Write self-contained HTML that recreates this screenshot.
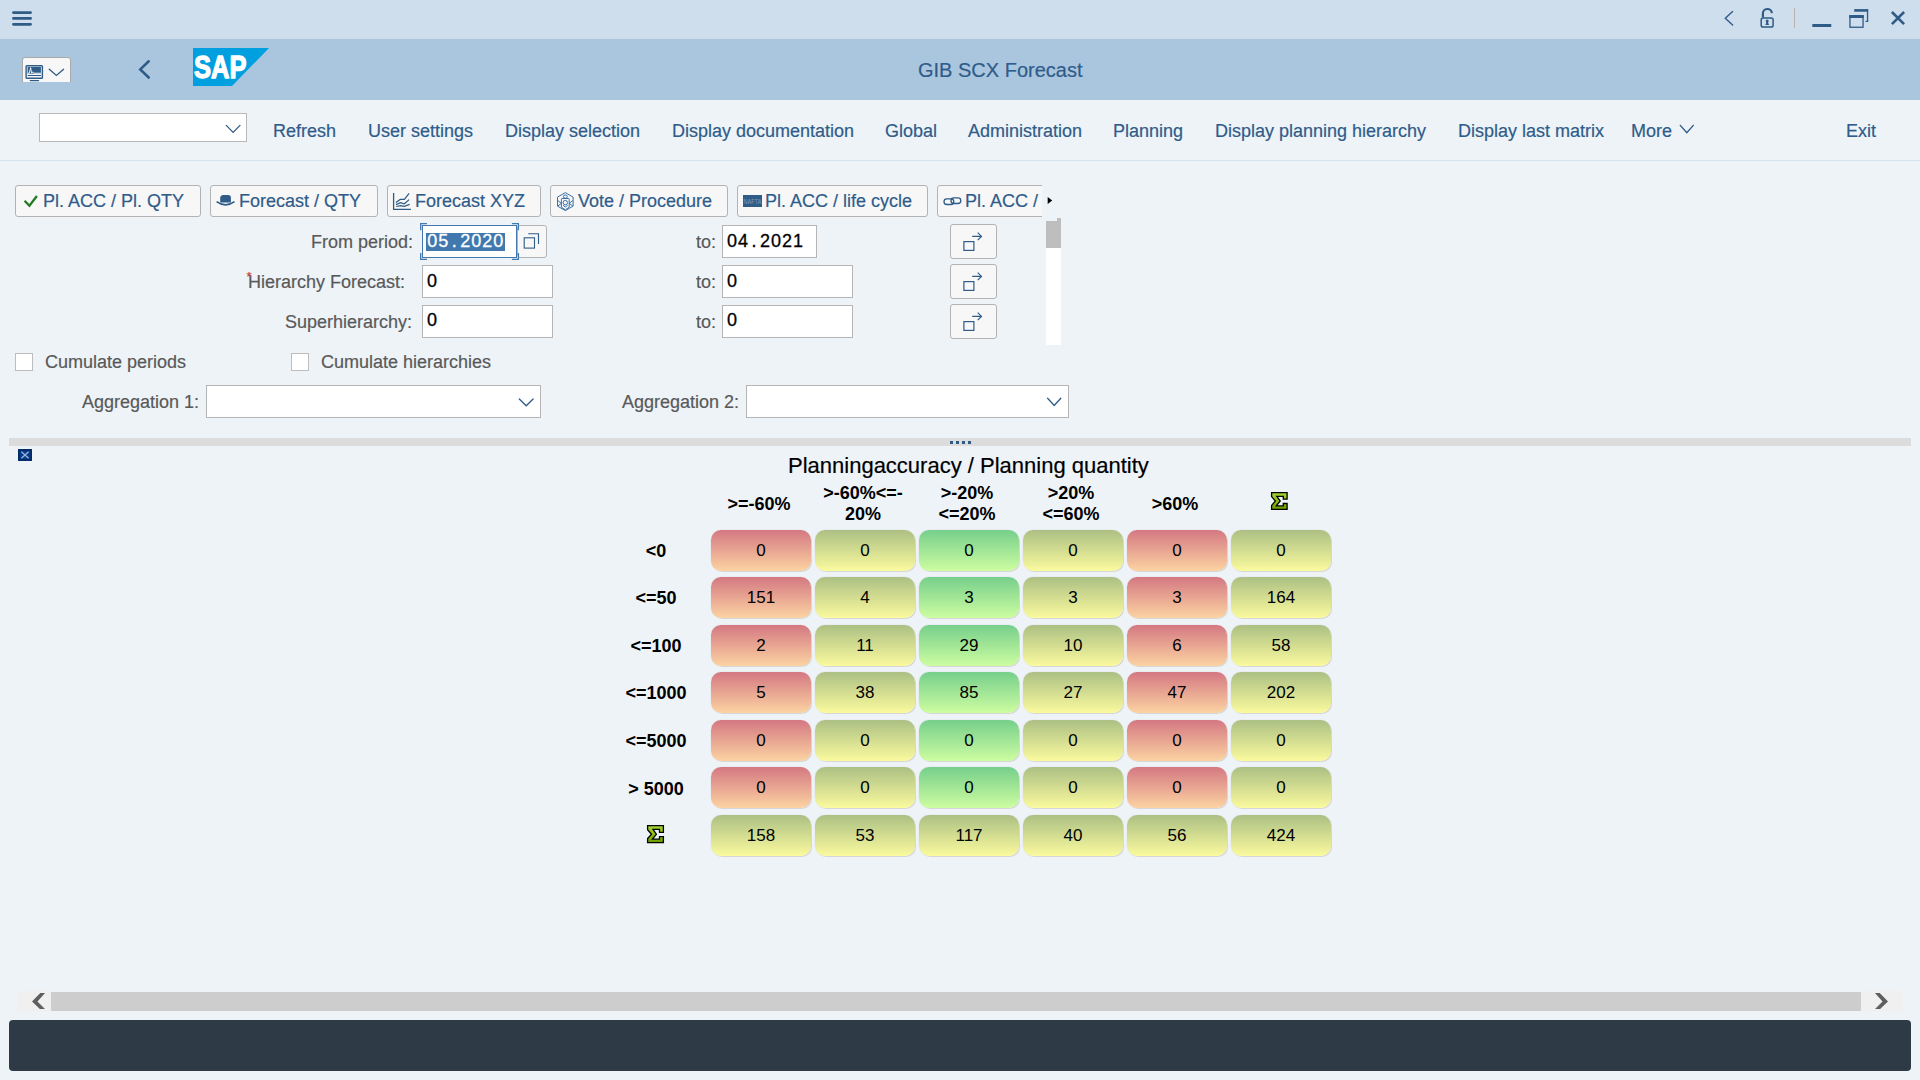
<!DOCTYPE html>
<html><head><meta charset="utf-8">
<style>
*{margin:0;padding:0;box-sizing:border-box}
html,body{width:1920px;height:1080px;overflow:hidden}
body{position:relative;background:#eef3f8;font-family:"Liberation Sans",sans-serif;color:#000}
.a{position:absolute}
.t{position:absolute;white-space:nowrap;line-height:1;-webkit-text-stroke:0.2px currentColor}
#top{left:0;top:0;width:1920px;height:39px;background:#cfdeed}
#hdr{left:0;top:39px;width:1920px;height:61px;background:#aac6df}
.tb{color:#2f5c8a;font-size:18px}
.btn{position:absolute;top:185px;height:32px;background:#f7f7f7;border:1px solid #b3b3b3;border-radius:3px}
.bt{color:#2f5c8a;font-size:18px}
.lbl{color:#595959;font-size:18px}
.inp{position:absolute;background:#fff;border:1px solid #b5b5b5}
.mn{font-size:18px;-webkit-text-stroke:0.3px currentColor}.mn i{font-style:normal;display:inline-block;width:11px;text-align:center}
.rb{position:absolute;left:950px;width:47px;height:35px;background:#f7f7f7;border:1px solid #b3b3b3;border-radius:3px}
.cb{position:absolute;top:353px;width:18px;height:18px;background:#fff;border:1px solid #bdbdbd}
.c{position:absolute;width:100px;height:41px;border-radius:10px;box-shadow:1px 1px 0 #d6d6d6,-0.5px -0.5px 0 #e4e6e8;font-size:17px;text-align:center;line-height:41px;color:#000}
.r{background:linear-gradient(#d47882,#fcd3a2)}
.y{background:linear-gradient(#abc084,#fbfa9e)}
.g{background:linear-gradient(#76cf8b,#cdfda1)}
.hd{position:absolute;font-weight:bold;font-size:18px;text-align:center;line-height:21px;width:104px}
.rl{position:absolute;font-weight:bold;font-size:18px;text-align:center;width:90px;left:611px;line-height:1}
</style></head><body>
<div id="top" class="a"></div>
<div id="hdr" class="a"></div>

<!-- toolbar -->
<div class="inp" style="left:39px;top:113px;width:208px;height:29px;border-color:#b9b9b9"></div>
<div class="t tb" style="left:273px;top:122px">Refresh</div>
<div class="t tb" style="left:368px;top:122px">User settings</div>
<div class="t tb" style="left:505px;top:122px">Display selection</div>
<div class="t tb" style="left:672px;top:122px">Display documentation</div>
<div class="t tb" style="left:885px;top:122px">Global</div>
<div class="t tb" style="left:968px;top:122px">Administration</div>
<div class="t tb" style="left:1113px;top:122px">Planning</div>
<div class="t tb" style="left:1215px;top:122px">Display planning hierarchy</div>
<div class="t tb" style="left:1458px;top:122px">Display last matrix</div>
<div class="t tb" style="left:1631px;top:122px">More</div>
<div class="t tb" style="left:1846px;top:122px">Exit</div>

<!-- title -->
<div class="t" style="left:918px;top:60px;font-size:20px;color:#2f5c8a">GIB SCX Forecast</div>

<!-- tab buttons -->
<div class="btn" style="left:15px;width:186px"></div>
<div class="t bt" style="left:43px;top:192px">Pl. ACC / Pl. QTY</div>
<div class="btn" style="left:210px;width:168px"></div>
<div class="t bt" style="left:239px;top:192px">Forecast / QTY</div>
<div class="btn" style="left:387px;width:154px"></div>
<div class="t bt" style="left:415px;top:192px">Forecast XYZ</div>
<div class="btn" style="left:550px;width:178px"></div>
<div class="t bt" style="left:578px;top:192px">Vote / Procedure</div>
<div class="btn" style="left:737px;width:191px"></div>
<div class="t bt" style="left:765px;top:192px">Pl. ACC / life cycle</div>

<!-- form -->
<div class="t lbl" style="left:311px;top:233px">From period:</div>
<div class="t lbl" style="left:248px;top:273px">Hierarchy Forecast:</div>
<div class="t lbl" style="left:285px;top:313px">Superhierarchy:</div>
<div class="inp" style="left:422px;top:265px;width:131px;height:33px"></div>
<div class="inp" style="left:422px;top:305px;width:131px;height:33px"></div>
<div class="t lbl" style="left:696px;top:233px">to:</div>
<div class="t lbl" style="left:696px;top:273px">to:</div>
<div class="t lbl" style="left:696px;top:313px">to:</div>
<div class="inp" style="left:722px;top:225px;width:95px;height:33px"></div>
<div class="inp" style="left:722px;top:265px;width:131px;height:33px"></div>
<div class="inp" style="left:722px;top:305px;width:131px;height:33px"></div>
<div class="rb" style="top:224px"></div>
<div class="rb" style="top:264px"></div>
<div class="rb" style="top:304px"></div>

<div class="cb" style="left:15px"></div>
<div class="t lbl" style="left:45px;top:353px">Cumulate periods</div>
<div class="cb" style="left:291px"></div>
<div class="t lbl" style="left:321px;top:353px">Cumulate hierarchies</div>
<div class="t lbl" style="left:82px;top:393px">Aggregation 1:</div>
<div class="inp" style="left:206px;top:385px;width:335px;height:33px"></div>
<div class="t lbl" style="left:622px;top:393px">Aggregation 2:</div>
<div class="inp" style="left:746px;top:385px;width:323px;height:33px"></div>

<!-- splitter -->
<div class="a" style="left:9px;top:438px;width:1902px;height:8px;background:#dcdcdc"></div>

<!-- matrix -->
<div class="t" style="left:788px;top:455px;font-size:22px">Planningaccuracy / Planning quantity</div>


<div class="hd" style="left:707px;top:494px">&gt;=-60%</div>
<div class="hd" style="left:811px;top:483px">&gt;-60%&lt;=-<br>20%</div>
<div class="hd" style="left:915px;top:483px">&gt;-20%<br>&lt;=20%</div>
<div class="hd" style="left:1019px;top:483px">&gt;20%<br>&lt;=60%</div>
<div class="hd" style="left:1123px;top:494px">&gt;60%</div>
<div class="rl" style="top:542px">&lt;0</div>
<div class="c r" style="left:711px;top:530px">0</div>
<div class="c y" style="left:815px;top:530px">0</div>
<div class="c g" style="left:919px;top:530px">0</div>
<div class="c y" style="left:1023px;top:530px">0</div>
<div class="c r" style="left:1127px;top:530px">0</div>
<div class="c y" style="left:1231px;top:530px">0</div>
<div class="rl" style="top:589px">&lt;=50</div>
<div class="c r" style="left:711px;top:577px">151</div>
<div class="c y" style="left:815px;top:577px">4</div>
<div class="c g" style="left:919px;top:577px">3</div>
<div class="c y" style="left:1023px;top:577px">3</div>
<div class="c r" style="left:1127px;top:577px">3</div>
<div class="c y" style="left:1231px;top:577px">164</div>
<div class="rl" style="top:637px">&lt;=100</div>
<div class="c r" style="left:711px;top:625px">2</div>
<div class="c y" style="left:815px;top:625px">11</div>
<div class="c g" style="left:919px;top:625px">29</div>
<div class="c y" style="left:1023px;top:625px">10</div>
<div class="c r" style="left:1127px;top:625px">6</div>
<div class="c y" style="left:1231px;top:625px">58</div>
<div class="rl" style="top:684px">&lt;=1000</div>
<div class="c r" style="left:711px;top:672px">5</div>
<div class="c y" style="left:815px;top:672px">38</div>
<div class="c g" style="left:919px;top:672px">85</div>
<div class="c y" style="left:1023px;top:672px">27</div>
<div class="c r" style="left:1127px;top:672px">47</div>
<div class="c y" style="left:1231px;top:672px">202</div>
<div class="rl" style="top:732px">&lt;=5000</div>
<div class="c r" style="left:711px;top:720px">0</div>
<div class="c y" style="left:815px;top:720px">0</div>
<div class="c g" style="left:919px;top:720px">0</div>
<div class="c y" style="left:1023px;top:720px">0</div>
<div class="c r" style="left:1127px;top:720px">0</div>
<div class="c y" style="left:1231px;top:720px">0</div>
<div class="rl" style="top:780px">&gt; 5000</div>
<div class="c r" style="left:711px;top:767px">0</div>
<div class="c y" style="left:815px;top:767px">0</div>
<div class="c g" style="left:919px;top:767px">0</div>
<div class="c y" style="left:1023px;top:767px">0</div>
<div class="c r" style="left:1127px;top:767px">0</div>
<div class="c y" style="left:1231px;top:767px">0</div>
<div class="c y" style="left:711px;top:815px">158</div>
<div class="c y" style="left:815px;top:815px">53</div>
<div class="c y" style="left:919px;top:815px">117</div>
<div class="c y" style="left:1023px;top:815px">40</div>
<div class="c y" style="left:1127px;top:815px">56</div>
<div class="c y" style="left:1231px;top:815px">424</div>

<!-- bottom scrollbar -->
<div class="a" style="left:17px;top:991px;width:34px;height:21px;background:#f0f0f0"></div>
<div class="a" style="left:51px;top:992px;width:1810px;height:19px;background:#cdcdcd"></div>
<div class="a" style="left:1861px;top:991px;width:42px;height:21px;background:#f0f0f0"></div>
<!-- status bar -->
<div class="a" style="left:9px;top:1020px;width:1902px;height:51px;background:#2f3a47;border-radius:4px"></div>

<!-- session button -->
<div class="a" style="left:22px;top:57px;width:49px;height:25px;overflow:hidden"><div style="width:49px;height:32px;background:#f7f7f7;border:1px solid #a9a9a9;border-radius:3px"></div></div>
<!-- toolbar separator line -->
<div class="a" style="left:0;top:160px;width:1920px;height:1px;background:#d6e3ef"></div>
<!-- button 6 clipped -->
<div class="a" style="left:937px;top:185px;width:105px;height:32px;overflow:hidden"><div style="position:absolute;left:0;top:0;width:160px;height:32px;background:#f7f7f7;border:1px solid #b3b3b3;border-radius:3px"></div><div class="t bt" style="left:28px;top:7px">Pl. ACC / .</div></div>
<!-- F4 + focused input -->
<div class="a" style="left:517px;top:225px;width:30px;height:33px;background:#f7f7f7;border:1px solid #b3b3b3;border-radius:3px"></div>
<div class="inp" style="left:422px;top:225px;width:95px;height:33px;border-color:#4178ae"></div>
<div class="a" style="left:426px;top:233px;width:79px;height:18px;background:#4178ae"></div>
<div class="t mn" style="left:426.7px;top:231.8px;color:#fff"><i>0</i><i>5</i><i>.</i><i>2</i><i>0</i><i>2</i><i>0</i></div>
<div class="t mn" style="left:726.6px;top:231.8px;color:#000"><i>0</i><i>4</i><i>.</i><i>2</i><i>0</i><i>2</i><i>1</i></div>
<div class="t mn" style="left:426.6px;top:271.5px;color:#000"><i>0</i></div>
<div class="t mn" style="left:426.6px;top:311.4px;color:#000"><i>0</i></div>
<div class="t mn" style="left:726.6px;top:271.5px;color:#000"><i>0</i></div>
<div class="t mn" style="left:726.6px;top:311.4px;color:#000"><i>0</i></div>
<div class="t" style="left:246.5px;top:270px;font-size:13px;color:#c23b3b">*</div>
<!-- form scrollbar -->
<div class="a" style="left:1046px;top:221px;width:15px;height:124px;background:#fff"></div>
<div class="a" style="left:1046px;top:221px;width:15px;height:27px;background:#bebebe"></div>
<div class="a" style="left:1057px;top:218px;width:4px;height:3px;background:#bebebe"></div>

<svg class="a" style="left:0;top:0" width="1920" height="1080" viewBox="0 0 1920 1080" fill="none">
<defs>
<linearGradient id="sg" x1="0" y1="0" x2="0" y2="1"><stop offset="0" stop-color="#a8d23a"/><stop offset="0.5" stop-color="#8cc00a"/><stop offset="1" stop-color="#6a9a00"/></linearGradient>
</defs>
<g stroke="#2f5b87" stroke-linecap="round">
 <path d="M13.4 12.6H30.6M13.4 18.4H30.6M13.4 24.3H30.6" stroke-width="2.7"/>
 <path d="M148.7 61.3L140.3 69.4L148.7 77.5" stroke-width="2.6"/>
 <path d="M1732.6 11.6L1725.3 18.3L1732.6 25.1" stroke-width="1.4"/>
 <path d="M1762.9 17.6V13.8A4.5 4.5 0 0 1 1771.9 13.2" stroke-width="2.2" stroke-linecap="butt"/>
 <rect x="1761.2" y="18.1" width="11.9" height="9" rx="1.8" stroke-width="1.5"/>
 <path d="M49.3 69.3L56.4 75.5L63.6 69.3" stroke-width="1.3"/>
 <path d="M226.3 125.4L233.15 132.4L240 125.4" stroke-width="1.3"/>
 <path d="M1680.3 125.4L1686.8 132.8L1693.3 125.4" stroke-width="1.4"/>
 <path d="M519.3 399L526.2 405.8L533.1 399" stroke-width="1.3"/>
 <path d="M1047.6 398.2L1054.2 405.5L1060.8 398.2" stroke-width="1.3"/>
 <rect x="26.1" y="65.7" width="16.3" height="12.5" rx="0.8" stroke-width="1.4"/>
 <path d="M30.3 80.6H38.5" stroke-width="1.4"/>
</g>
<g fill="#2f5b87">
 <circle cx="1767.2" cy="21" r="1.5"/><path d="M1766.6 21.8L1765.4 24.9H1769L1767.8 21.8Z"/>
 <rect x="1812.3" y="24" width="19" height="3" rx="0.6"/>
 <rect x="1854.2" y="9.1" width="13.9" height="2.6"/><rect x="1866.9" y="9.1" width="1.3" height="12.8"/><rect x="1865.4" y="20.8" width="2.8" height="1.1"/>
 <rect x="1849.3" y="15.1" width="14.4" height="2.9"/>
 <rect x="27.6" y="67" width="13.3" height="6.7"/><rect x="27.6" y="75" width="13.3" height="1"/>
</g>
<rect x="1849.95" y="15.75" width="13.1" height="11.5" stroke="#2f5b87" stroke-width="1.3"/>
<path d="M1891.9 12L1904.1 24.1M1904.1 12L1891.9 24.1" stroke="#2f5b87" stroke-width="2.6"/>
<path d="M1794.5 8V27.7" stroke="#bab3ab" stroke-width="1"/>
<path d="M28 73.2H29.3L30.6 67.6L31.6 73.2L32.6 71.8L33.6 73.2H40.9" stroke="#fff" stroke-width="0.9"/>
<!-- SAP logo -->
<path d="M193 48H269L232 86H193Z" fill="#009fe0"/>
<text x="194" y="77.6" font-family="Liberation Sans" font-weight="bold" font-size="31" fill="#fff" stroke="#fff" stroke-width="1.3" stroke-linejoin="round" textLength="52.5" lengthAdjust="spacingAndGlyphs">SAP</text>
<!-- tab icons -->
<path d="M24.6 200.8L29.4 205.8L36.9 196" stroke="#237a23" stroke-width="2.3"/>
<path d="M220.2 202.4V197.6Q220.4 195.1 223 195.1H228.2Q230.9 195.1 230.9 197.6V202.4Z" fill="#2f5b87"/>
<path d="M216.6 201.6Q225.5 208 234.5 201.6" stroke="#2f5b87" stroke-width="1.7"/>
<g stroke="#2f5b87" stroke-width="1.2">
 <path d="M393.6 193.1V209.3H410.9" stroke-width="1.3"/>
 <path d="M395.9 202.4L400.2 199.4H404.4L409.1 193.3"/>
 <path d="M396 204.6L400.4 202.6L404.4 203.8L409.1 199.6"/>
 <path d="M396.3 206.5L400.6 205.7L404.4 206.4L409.6 204.4"/>
</g>
<g stroke="#3a70a8" stroke-width="1">
 <path d="M565.3 192.6L573.1 197.1V206.1L565.3 210.6L557.5 206.1V197.1Z"/>
 <path d="M562 198.5H568.6Q569.2 198.5 569.2 199.2V207.2L565.3 209.8L561.4 207.2V199.2Q561.4 198.5 562 198.5Z"/>
 <ellipse cx="565.3" cy="196.6" rx="2" ry="1.6"/>
 <circle cx="565.3" cy="202.6" r="2.2"/>
 <path d="M557.8 200.5L561.4 203.4L557.8 206M572.8 200.5L569.2 203.4L572.8 206M563 205.3L565.3 207L567.6 205.3"/>
</g>
<rect x="743" y="195" width="19" height="12" fill="#2f5b87"/>
<text x="743.5" y="204" font-family="Liberation Sans" font-size="7" fill="#7f9cbd" textLength="18" lengthAdjust="spacingAndGlyphs">NAFTA</text>
<rect x="944" y="198.9" width="9.8" height="5.6" rx="2.8" stroke="#2f5b87" stroke-width="1.3"/>
<rect x="951" y="197.9" width="9.8" height="5.6" rx="2.8" stroke="#2f5b87" stroke-width="1.3"/>
<path d="M1047.7 196.9L1052.2 200.45L1047.7 204Z" fill="#000"/>
<!-- focus brackets -->
<path d="M420.7 230.2V223.7H427M511.9 223.7H518.4V230.2M420.7 253V259.4H427M511.9 259.4H518.4V253" stroke="#4178ae" stroke-width="1.3"/>
<!-- copy icon -->
<rect x="524.2" y="237.8" width="10.3" height="10.3" stroke="#2f5b87" stroke-width="1.1"/>
<path d="M528.2 233.8H538.5V244.1" stroke="#2f5b87" stroke-width="1.1"/>
<!-- range btn icons -->
<g stroke="#2f5b87" stroke-width="1.2">
 <rect x="963.9" y="241.6" width="10" height="8.8"/><path d="M972.2 236.4H981.2M977.7 232.6L981.5 236.4L977.7 240.2"/>
 <rect x="963.9" y="281.6" width="10" height="8.8"/><path d="M972.2 276.4H981.2M977.7 272.6L981.5 276.4L977.7 280.2"/>
 <rect x="963.9" y="321.6" width="10" height="8.8"/><path d="M972.2 316.4H981.2M977.7 312.6L981.5 316.4L977.7 320.2"/>
</g>
<!-- splitter dots -->
<g fill="#2f5b87"><rect x="950" y="441" width="3" height="3"/><rect x="956" y="441" width="3" height="3"/><rect x="962" y="441" width="3" height="3"/><rect x="968" y="441" width="3" height="3"/></g>
<!-- X icon -->
<rect x="18" y="449" width="14" height="12" fill="#073b85"/>
<rect x="19" y="450" width="12" height="10" fill="none" stroke="#02245a" stroke-width="1.2"/>
<path d="M21.4 451.7L28.6 458.3M28.6 451.7L21.4 458.3" stroke="#9bb3de" stroke-width="1.3"/>
<!-- sigma icons -->
<path id="sig" d="M1271.6 492.6H1287.1V499.2H1283.3V496.3H1276.8L1280.2 501L1276.3 505.9H1283.3V503.5H1287.1V509.4H1271.6V505.4L1275.4 501L1271.6 496.6Z" fill="url(#sg)" stroke="#000" stroke-width="1.3" stroke-linejoin="miter"/>
<path d="M647.6 825.6H663.4V832.3H659.5V829.4H653L656.4 834.2L652.5 839.2H659.5V836.7H663.4V842.6H647.6V838.6L651.5 834.2L647.6 829.7Z" fill="url(#sg)" stroke="#000" stroke-width="1.3"/>
<!-- bottom scroll arrows -->
<path d="M40.3 993.1H45L37.5 1001.5L45 1008.9H39.9L32 1001.5Z" fill="#5f5f5f"/>
<path d="M1879.7 993.1H1875L1882.5 1001.5L1875 1008.9H1880.1L1888 1001.5Z" fill="#5f5f5f"/>
</svg>
</body></html>
